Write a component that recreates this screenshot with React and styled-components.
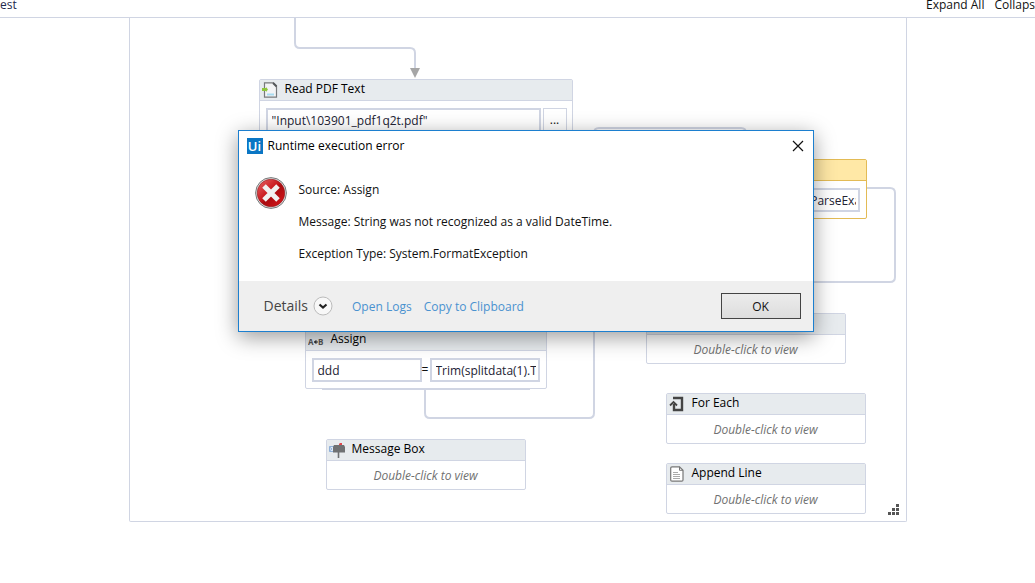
import styled, { createGlobalStyle } from "styled-components";

const LINE = "#d0d5e3";

const activities = [
  { id: "hidden-assign", kind: "stub", x: 192, y: 360, width: 208 },
  { id: "read-pdf", kind: "file", title: "Read PDF Text", icon: "pdf", x: 129, y: 61, width: 314, value: '"Input\\103901_pdf1q2t.pdf"' },
  { id: "parse", kind: "assign", title: "Assign", icon: "assign", x: 495, y: 141, width: 242, active: true, to: "", value: "Datetime.ParseExact(" },
  { id: "assign", kind: "assign", title: "Assign", icon: "assign", x: 175, y: 311, width: 242, to: "ddd", value: "Trim(splitdata(1).ToString)" },
  { id: "loop", kind: "collapsed", title: "", x: 516, y: 295, width: 200 },
  { id: "for-each", kind: "collapsed", title: "For Each", icon: "loop", x: 536, y: 375, width: 200 },
  { id: "append", kind: "collapsed", title: "Append Line", icon: "page", x: 536, y: 445, width: 200 },
  { id: "message", kind: "collapsed", title: "Message Box", icon: "mailbox", x: 196, y: 421, width: 200 },
];

const ActivityIcon = ({ name }) => (
  <svg width="16" height="16" viewBox="0 0 16 16" fill="none" aria-hidden="true">
    {name === "pdf" && (
      <>
        <path d="M2.5.8h9l3 3v11.4h-12z" fill="#f3f4f5" stroke="#77797b" strokeWidth="1.2" />
        <path d="M11 1l3.5 3.5" stroke="#55585a" strokeWidth="1.8" />
        <path d="M0 6h4V5l2 2.5L4 10V9H0z" fill="#8fc63d" />
        <path d="M5 12.5h7" stroke="#a9dcf0" strokeWidth="2" />
      </>
    )}
    {name === "assign" && (
      <>
        <text x="0" y="13" fontSize="8" fontWeight="700" fill="#555">A</text>
        <text x="10" y="13" fontSize="8" fontWeight="700" fill="#555">B</text>
        <path d="M10 10H6M8 8.5L6.5 10 8 11.500z" stroke="#333" fill="#333" />
      </>
    )}
    {name === "loop" && (
      <>
        <path d="M4 2h9v12H5V8" stroke="#444" strokeWidth="2.4" />
        <path d="M1 9.5L4.5 6 8 9.5" stroke="#444" strokeWidth="1.8" />
      </>
    )}
    {name === "page" && (
      <>
        <path d="M1.7 2Q1.7.8 3 .8h7.5L14 4.3V14q0 1.2-1.2 1.2H3q-1.3 0-1.3-1.2z" fill="#fff" stroke="#777" strokeWidth="1.2" />
        <path d="M10.5.8v3.5H14" stroke="#777" />
        <path d="M4 6.5h5M4 8.5h7M4 10.5h7M4 12.5h7" stroke="#aaa" />
      </>
    )}
    {name === "mailbox" && (
      <>
        <path d="M.5 4.5h5v5h-5zM.5 5L3 7 .5 9" fill="#dce9f7" stroke="#8fb0d8" />
        <path d="M4 10.5V5l1-2h10l1 2v5.5z" fill="#6f7173" />
        <path d="M9.5 10v6" stroke="#6f7173" strokeWidth="1.6" />
        <path d="M10 3V2l1-1h2v2z" fill="#e0474c" />
      </>
    )}
  </svg>
);

const Activity = ({ item }) => {
  if (item.kind === "stub") return <Stub $x={item.x} $y={item.y} $width={item.width} />;

  return (
    <Node $x={item.x} $y={item.y} $width={item.width} $active={item.active}>
      <NodeHeader $active={item.active}>
        <ActivityIcon name={item.icon} />
        <NodeTitle>{item.title}</NodeTitle>
      </NodeHeader>
      {item.kind === "collapsed" && <Hint>Double-click to view</Hint>}
      {item.kind === "file" && (
        <FileRow>
          <Field aria-label="File name" defaultValue={item.value} />
          <BrowseButton type="button" aria-label="Browse">...</BrowseButton>
        </FileRow>
      )}
      {item.kind === "assign" && (
        <AssignRow>
          <Field aria-label="To" defaultValue={item.to} />
          <span>=</span>
          <Field aria-label="Value" defaultValue={item.value} />
        </AssignRow>
      )}
    </Node>
  );
};

const Connectors = () => (
  <ConnectorLayer width="776" height="503" viewBox="130 18 776 503" aria-hidden="true">
    <path d="M295 18V43q0 5 5 5H410q5 0 5 5V69" />
    <path d="M425 389V413q0 5 5 5H589q5 0 5-5V133q0-5 5-5H741q5 0 5 5V159" />
    <path d="M867 188H890q5 0 5 5V277q0 5-5 5H751q-5 0-5 5V313" />
    <polygon points="410,68 420,68 415,78" />
  </ConnectorLayer>
);

const ErrorIcon = () => (
  <svg width="32" height="32" viewBox="0 0 32 32" role="img" aria-label="Error">
    <defs>
      <linearGradient id="error-fill" x1="0" y1="0" x2="1" y2="1">
        <stop offset="0" stopColor="#e8696b" />
        <stop offset=".45" stopColor="#c9191e" />
        <stop offset=".55" stopColor="#a90b10" />
        <stop offset="1" stopColor="#e0181c" />
      </linearGradient>
    </defs>
    <circle cx="16" cy="16" r="15.4" fill="#e4e4e4" stroke="#77797b" />
    <circle cx="16" cy="16" r="13.8" fill="url(#error-fill)" stroke="#8d1a1c" strokeWidth=".6" />
    <path d="M9 9l14 14M23 9L9 23" stroke="#f1f1f1" strokeWidth="5" />
  </svg>
);

const ErrorDialog = () => (
  <Dialog role="dialog" aria-labelledby="error-title">
    <TitleBar>
      <Logo aria-hidden="true">Ui</Logo>
      <Title id="error-title">Runtime execution error</Title>
      <CloseButton type="button" aria-label="Close">
        <svg width="12" height="12" viewBox="0 0 12 12" stroke="#111" strokeWidth="1.2">
          <path d="M1 1l10 10M11 1L1 11" />
        </svg>
      </CloseButton>
    </TitleBar>
    <DialogBody>
      <ErrorIcon />
      <Message>
        <p>Source: Assign</p>
        <p>Message: String was not recognized as a valid DateTime.</p>
        <p>Exception Type: System.FormatException</p>
      </Message>
    </DialogBody>
    <DialogFooter>
      <DetailsButton type="button">
        Details
        <svg width="20" height="20" viewBox="0 0 20 20" fill="none">
          <circle cx="10" cy="10" r="9" fill="#f8f8f8" stroke="#bbb" />
          <path d="M6.5 8.5l3.5 3 3.5-3" stroke="#222" strokeWidth="2.2" />
        </svg>
      </DetailsButton>
      <FooterLink href="#logs">Open Logs</FooterLink>
      <FooterLink href="#copy">Copy to Clipboard</FooterLink>
      <OkButton type="button">OK</OkButton>
    </DialogFooter>
  </Dialog>
);

const App = () => (
  <>
    <GlobalStyle />
    <TopBar>
      <Crumb>est</Crumb>
      <TextButton type="button">Expand All</TextButton>
      <TextButton type="button">Collaps</TextButton>
    </TopBar>
    <Canvas>
      <Connectors />
      {activities.map((item) => (
        <Activity key={item.id} item={item} />
      ))}
      <ResizeGrip width="11" height="11" viewBox="0 0 11 11" fill="#555" aria-hidden="true">
        <path d="M8 0h3v3H8zM4 4h3v3H4zM8 4h3v3H8zM0 8h3v3H0zM4 8h3v3H4zM8 8h3v3H8z" />
      </ResizeGrip>
      <ErrorDialog />
    </Canvas>
  </>
);

export default App;

const GlobalStyle = createGlobalStyle`
  * {
    box-sizing: border-box;
  }

  body {
    margin: 0;
    background: #ffffff;
    color: #111111;
    font: 12px/16px "Open Sans", sans-serif;
    overflow: hidden;
  }

  button, input {
    font: inherit;
    color: inherit;
  }

  svg {
    flex: none;
    display: block;
  }
`;

const TopBar = styled.header`
  display: flex;
  gap: 10px;
  height: 18px;
  line-height: 10px;
  border-bottom: 1px solid ${LINE};
`;

const Crumb = styled.span`
  flex: 1;
  color: #1f2a4d;
`;

const TextButton = styled.button`
  align-self: flex-start;
  padding: 0;
  border: 0;
  background: none;
`;

const Canvas = styled.main`
  position: relative;
  max-width: 778px;
  min-height: 504px;
  margin: 0 auto;
  border: 1px solid ${LINE};
  border-top: 0;
  border-radius: 0 0 2px 2px;
`;

const ConnectorLayer = styled.svg`
  position: absolute;
  top: 0;
  left: 0;

  path {
    fill: none;
    stroke: ${LINE};
    stroke-width: 2;
  }

  polygon {
    fill: #a6a6a6;
  }
`;

const Node = styled.section`
  position: absolute;
  left: ${({ $x }) => $x}px;
  top: ${({ $y }) => $y}px;
  width: ${({ $width }) => $width}px;
  background: #ffffff;
  border: 1px solid ${({ $active }) => ($active ? "#e3bb55" : LINE)};
  border-radius: 2px;
`;

const Stub = styled.div`
  position: absolute;
  left: ${({ $x }) => $x}px;
  top: ${({ $y }) => $y}px;
  width: ${({ $width }) => $width}px;
  height: 12px;
  border-bottom: 1px solid ${LINE};
`;

const NodeHeader = styled.header`
  display: flex;
  align-items: center;
  gap: 7px;
  height: 21px;
  padding: 0 2px;
  color: #000000;
  background: ${({ $active }) => ($active ? "#ffe8a6" : "#e7ebee")};
  border-bottom: 1px solid ${({ $active }) => ($active ? "#e3bb55" : LINE)};
`;

const NodeTitle = styled.span`
  padding-bottom: 2px;
`;

const Hint = styled.p`
  margin: 0;
  padding: 7px 0 5px;
  text-align: center;
  font-style: italic;
  color: #707070;
`;

const Field = styled.input`
  min-width: 0;
  width: 100%;
  height: 24px;
  padding: 0 2px 0 4px;
  border: 2px solid ${LINE};
  background: #ffffff;
  color: #222233;
`;

const FileRow = styled.div`
  display: grid;
  grid-template-columns: 1fr 24px;
  gap: 2px;
  padding: 7px 5px 6px 6px;
`;

const BrowseButton = styled.button`
  padding: 0;
  border: 1px solid ${LINE};
  background: #ffffff;
`;

const AssignRow = styled.div`
  display: grid;
  grid-template-columns: 1fr 8px 1fr;
  align-items: center;
  padding: 7px 6px 6px;
`;

const ResizeGrip = styled.svg`
  position: absolute;
  right: 7px;
  bottom: 6px;
`;

const Dialog = styled.div`
  position: absolute;
  left: 108px;
  top: 112px;
  width: 576px;
  background: #ffffff;
  border: 1px solid #1c7fcf;
  box-shadow: 0 5px 20px rgba(0, 0, 0, 0.4);
`;

const TitleBar = styled.div`
  display: flex;
  align-items: center;
  gap: 5px;
  height: 30px;
  padding: 0 8px;
`;

const Logo = styled.span`
  width: 16px;
  height: 16px;
  background: #0a76c4;
  color: #ffffff;
  font-size: 13px;
  font-weight: 600;
  text-align: center;
`;

const Title = styled.h1`
  flex: 1;
  margin: 0;
  font: inherit;
  color: #000000;
`;

const CloseButton = styled.button`
  padding: 1px;
  border: 0;
  background: none;
`;

const DialogBody = styled.div`
  display: flex;
  gap: 12px;
  padding: 16px 16px 19px;
`;

const Message = styled.div`
  display: grid;
  gap: 16px;
  padding-top: 5px;

  p {
    margin: 0;
  }
`;

const DialogFooter = styled.div`
  display: flex;
  align-items: center;
  gap: 12px;
  padding: 12px 12px 12px 25px;
  background: #efefef;
`;

const DetailsButton = styled.button`
  display: flex;
  align-items: center;
  gap: 5px;
  margin-right: 7px;
  padding: 0;
  border: 0;
  background: none;
  color: #444444;
  font-size: 14px;
`;

const FooterLink = styled.a`
  padding-top: 2px;
  color: #4a92cf;
  text-decoration: none;
`;

const OkButton = styled.button`
  width: 80px;
  height: 26px;
  margin-left: auto;
  padding: 2px 0 0;
  border: 1px solid #444444;
  background: linear-gradient(#ececec, #dddddd);
`;
